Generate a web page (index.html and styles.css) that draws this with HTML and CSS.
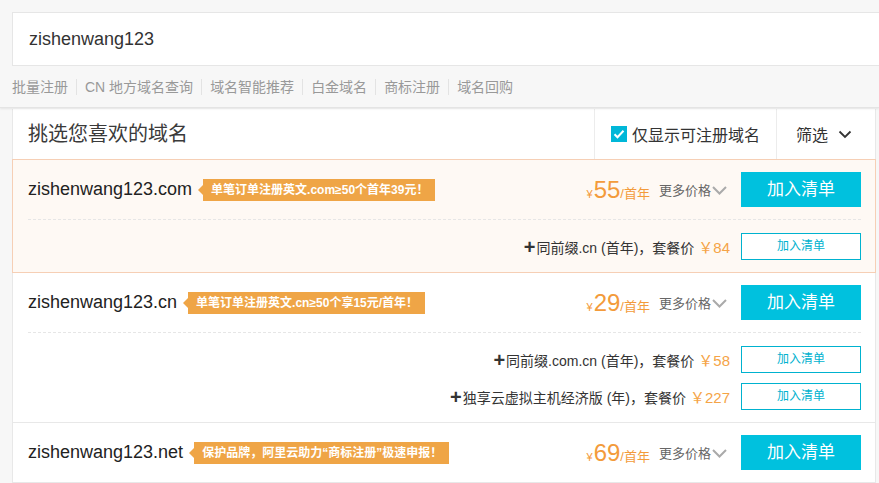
FILE: index.html
```html
<!DOCTYPE html>
<html lang="zh-CN">
<head>
    <meta charset="UTF-8">
    <meta name="viewport" content="width=device-width, initial-scale=1.0">
    <title>域名注册</title>
    <link rel="stylesheet" href="styles.css">
</head>
<body>
    <div class="top">
        <div class="search">zishenwang123</div>
        <ul class="links">
            <li>批量注册</li>
            <li>CN 地方域名查询</li>
            <li>域名智能推荐</li>
            <li>白金域名</li>
            <li>商标注册</li>
            <li>域名回购</li>
        </ul>
    </div>

    <div class="panel">
        <div class="head">
            <div class="title">挑选您喜欢的域名</div>
            <div class="only">
                <span class="check">
                    <svg width="16" height="16" viewBox="0 0 16 16"><path d="M3.5 8.2l3 3 6-6.4" fill="none" stroke="#fff" stroke-width="2"/></svg>
                </span>
                仅显示可注册域名
            </div>
            <div class="sort">
                筛选
                <svg width="14" height="9" viewBox="0 0 14 9"><path d="M1.5 1.5l5.5 5.5 5.5-5.5" fill="none" stroke="#333" stroke-width="1.8"/></svg>
            </div>
        </div>

        <div class="row hot">
            <div class="main">
                <span class="name">zishenwang123.com</span>
                <span class="tag">单笔订单注册英文.com≥50个首年39元！</span>
                <span class="price"><i>¥</i><b>55</b>/首年</span>
                <span class="more">更多价格
                    <svg width="15" height="9" viewBox="0 0 15 9"><path d="M1 1l6.5 6.5 6.5-6.5" fill="none" stroke="#aaa" stroke-width="2"/></svg>
                </span>
                <span class="btn">加入清单</span>
            </div>
            <div class="subs">
                <div class="sub">
                    <span class="plus">+</span>同前缀.cn (首年)，套餐价<em>￥84</em>
                    <span class="btn-line">加入清单</span>
                </div>
            </div>
        </div>

        <div class="row">
            <div class="main">
                <span class="name">zishenwang123.cn</span>
                <span class="tag">单笔订单注册英文.cn≥50个享15元/首年！</span>
                <span class="price"><i>¥</i><b>29</b>/首年</span>
                <span class="more">更多价格
                    <svg width="15" height="9" viewBox="0 0 15 9"><path d="M1 1l6.5 6.5 6.5-6.5" fill="none" stroke="#aaa" stroke-width="2"/></svg>
                </span>
                <span class="btn">加入清单</span>
            </div>
            <div class="subs">
                <div class="sub">
                    <span class="plus">+</span>同前缀.com.cn (首年)，套餐价<em>￥58</em>
                    <span class="btn-line">加入清单</span>
                </div>
                <div class="sub">
                    <span class="plus">+</span>独享云虚拟主机经济版 (年)，套餐价<em>￥227</em>
                    <span class="btn-line">加入清单</span>
                </div>
            </div>
        </div>

        <div class="row">
            <div class="main">
                <span class="name">zishenwang123.net</span>
                <span class="tag">保护品牌，阿里云助力“商标注册”极速申报！</span>
                <span class="price"><i>¥</i><b>69</b>/首年</span>
                <span class="more">更多价格
                    <svg width="15" height="9" viewBox="0 0 15 9"><path d="M1 1l6.5 6.5 6.5-6.5" fill="none" stroke="#aaa" stroke-width="2"/></svg>
                </span>
                <span class="btn">加入清单</span>
            </div>
        </div>
    </div>
</body>
</html>
```

FILE: styles.css
```css
*{
    list-style: none;
    padding: 0;
    margin: 0;
    box-sizing: border-box;
}
body{
    background: #f7f7f7;
    font-family: "Liberation Sans", "Noto Sans CJK SC", sans-serif;
    color: #333;
    overflow: hidden;
}

.top{
    padding: 12px 0 0 12px;
    background: #f7f7f7;
    border-bottom: 1px solid #e4e4e4;
    box-shadow: 0 1px 2px rgba(0,0,0,0.08);
    position: relative;
    z-index: 1;
}
.search{
    height: 54px;
    line-height: 52px;
    padding-left: 16px;
    background: #fff;
    border: 1px solid #e6e6e6;
    border-right: none;
    font-size: 18px;
    color: #333;
}
.links{
    display: flex;
    align-items: center;
    height: 41px;
    font-size: 14px;
    color: #999;
}
.links li{
    padding: 0 8px;
    line-height: 16px;
    border-left: 1px solid #e3e3e3;
}
.links li:first-child{
    padding-left: 0;
    border-left: none;
}

.panel{
    width: 864px;
    margin-left: 12px;
    margin-top: 1px;
    background: #fff;
    border-left: 1px solid #e8e8e8;
    border-right: 1px solid #e8e8e8;
}
.head{
    display: flex;
    align-items: stretch;
    height: 50px;
}
.title{
    flex: 1;
    padding-left: 15px;
    line-height: 50px;
    font-size: 20px;
    color: #3a3a3a;
}
.only{
    display: flex;
    align-items: center;
    padding: 0 16px;
    border-left: 1px solid #ececec;
    font-size: 16px;
}
.check{
    width: 16px;
    height: 16px;
    margin-right: 5px;
    background: #00b7d8;
}
.check svg{
    display: block;
}
.sort{
    display: flex;
    align-items: center;
    width: 99px;
    padding-left: 19px;
    border-left: 1px solid #ececec;
    font-size: 16px;
}
.sort svg{
    margin-left: 10px;
}

.row{
    margin: 0 -1px;
    padding: 0 14px 0 15px;
    border: 1px solid #e8e8e8;
    border-top: none;
}
.row.hot{
    background: #fef9f4;
    border: 1px solid #f6cfb5;
}
.main{
    display: flex;
    align-items: center;
    height: 59px;
}
.name{
    font-size: 18px;
    color: #222;
}
.tag{
    position: relative;
    margin-left: 11px;
    padding: 0 7px 0 8px;
    height: 22px;
    line-height: 22px;
    background: #efa546;
    color: #fff;
    font-size: 12px;
    font-weight: bold;
}
.tag::before{
    content: "";
    position: absolute;
    left: -5px;
    top: 6px;
    border-top: 5px solid transparent;
    border-bottom: 5px solid transparent;
    border-right: 5px solid #efa546;
}
.price{
    margin-left: auto;
    color: #f39b3b;
    font-size: 13px;
}
.price i{
    font-style: normal;
    font-size: 11px;
    margin-right: 1px;
}
.price b{
    font-weight: normal;
    font-size: 24px;
}
.more{
    display: flex;
    align-items: center;
    margin-left: 9px;
    font-size: 13px;
    color: #666;
}
.more svg{
    margin-left: 1px;
    margin-top: 2px;
}
.btn{
    width: 120px;
    height: 35px;
    margin-left: 14px;
    line-height: 35px;
    text-align: center;
    background: #00c1de;
    color: #fff;
    font-size: 17px;
}

.subs{
    padding: 13px 0 12px;
    border-top: 1px dashed #e6e6e6;
}
.sub{
    display: flex;
    justify-content: flex-end;
    align-items: center;
    height: 27px;
    font-size: 14px;
    color: #333;
}
.sub + .sub{
    margin-top: 10px;
}
.plus{
    font-size: 20px;
    font-weight: bold;
    line-height: 20px;
    margin-right: 1px;
}
.sub em{
    font-style: normal;
    color: #f5a447;
    margin-left: 4px;
    font-size: 15px;
}
.btn-line{
    width: 120px;
    height: 27px;
    margin-left: 11px;
    line-height: 25px;
    text-align: center;
    border: 1px solid #00b2cf;
    background: #fff;
    color: #00b2cf;
    font-size: 12px;
}
```
